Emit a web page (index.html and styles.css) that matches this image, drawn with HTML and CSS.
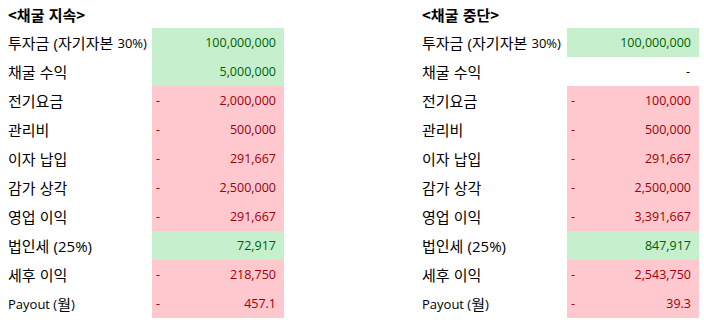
FILE: index.html
```html
<!DOCTYPE html>
<html lang="ko">
<head>
<meta charset="utf-8">
<link rel="stylesheet" href="styles.css">
</head>
<body>
<div class="page">
  <div class="sheet">
    <div class="title">&lt;채굴 지속&gt;</div>
    <div class="label">투자금 <span class="lat-big">(</span>자기자본 <span class="lat">30%)</span></div>
    <div class="val good"><span></span><span>100,000,000</span></div>
    <div class="label">채굴 수익</div>
    <div class="val good"><span></span><span>5,000,000</span></div>
    <div class="label">전기요금</div>
    <div class="val bad"><span>-</span><span>2,000,000</span></div>
    <div class="label">관리비</div>
    <div class="val bad"><span>-</span><span>500,000</span></div>
    <div class="label">이자 납입</div>
    <div class="val bad"><span>-</span><span>291,667</span></div>
    <div class="label">감가 상각</div>
    <div class="val bad"><span>-</span><span>2,500,000</span></div>
    <div class="label">영업 이익</div>
    <div class="val bad"><span>-</span><span>291,667</span></div>
    <div class="label">법인세 <span class="lat-big">(25%)</span></div>
    <div class="val good"><span></span><span>72,917</span></div>
    <div class="label">세후 이익</div>
    <div class="val bad"><span>-</span><span>218,750</span></div>
    <div class="label"><span class="lat">Payout (</span>월<span class="lat">)</span></div>
    <div class="val bad"><span>-</span><span>457.1</span></div>
  </div>
  <div class="sheet sheet-right">
    <div class="title">&lt;채굴 중단&gt;</div>
    <div class="label">투자금 <span class="lat-big">(</span>자기자본 <span class="lat">30%)</span></div>
    <div class="val good"><span></span><span>100,000,000</span></div>
    <div class="label">채굴 수익</div>
    <div class="val plain"><span></span><span>-</span></div>
    <div class="label">전기요금</div>
    <div class="val bad"><span>-</span><span>100,000</span></div>
    <div class="label">관리비</div>
    <div class="val bad"><span>-</span><span>500,000</span></div>
    <div class="label">이자 납입</div>
    <div class="val bad"><span>-</span><span>291,667</span></div>
    <div class="label">감가 상각</div>
    <div class="val bad"><span>-</span><span>2,500,000</span></div>
    <div class="label">영업 이익</div>
    <div class="val bad"><span>-</span><span>3,391,667</span></div>
    <div class="label">법인세 <span class="lat-big">(25%)</span></div>
    <div class="val good"><span></span><span>847,917</span></div>
    <div class="label">세후 이익</div>
    <div class="val bad"><span>-</span><span>2,543,750</span></div>
    <div class="label"><span class="lat">Payout (</span>월<span class="lat">)</span></div>
    <div class="val bad"><span>-</span><span>39.3</span></div>
  </div>
</div>
</body>
</html>
```
FILE: styles.css
```css
html, body {
  margin: 0;
  padding: 0;
  background: #ffffff;
}

.page {
  display: flex;
  padding-left: 8px;
  gap: 138px;
  font-family: "Noto Sans CJK KR", "Open Sans", sans-serif;
  font-size: 15px;
  color: #000000;
}

.sheet {
  display: grid;
  grid-template-columns: 144px 132px;
  grid-template-rows: 28px;
  grid-auto-rows: 29px;
}

.sheet-right {
  grid-template-columns: 145px 132px;
}

.title {
  grid-column: 1 / span 2;
  font-weight: bold;
  display: flex;
  align-items: center;
  font-size: 15px;
}

.label {
  display: flex;
  align-items: center;
  white-space: pre;
}

.lat {
  font-family: "Open Sans", sans-serif;
  font-size: 13px;
}

.lat-big {
  font-family: "Open Sans", sans-serif;
  font-size: 15px;
}

.val {
  display: flex;
  align-items: center;
  justify-content: space-between;
  padding: 0 8px 0 4px;
  font-family: "Open Sans", sans-serif;
  font-size: 12.5px;
}

.good {
  background: #c6efce;
  color: #006100;
}

.bad {
  background: #ffc7ce;
  color: #9c0006;
}

.plain {
  color: #000000;
  padding-right: 9px;
}
```
